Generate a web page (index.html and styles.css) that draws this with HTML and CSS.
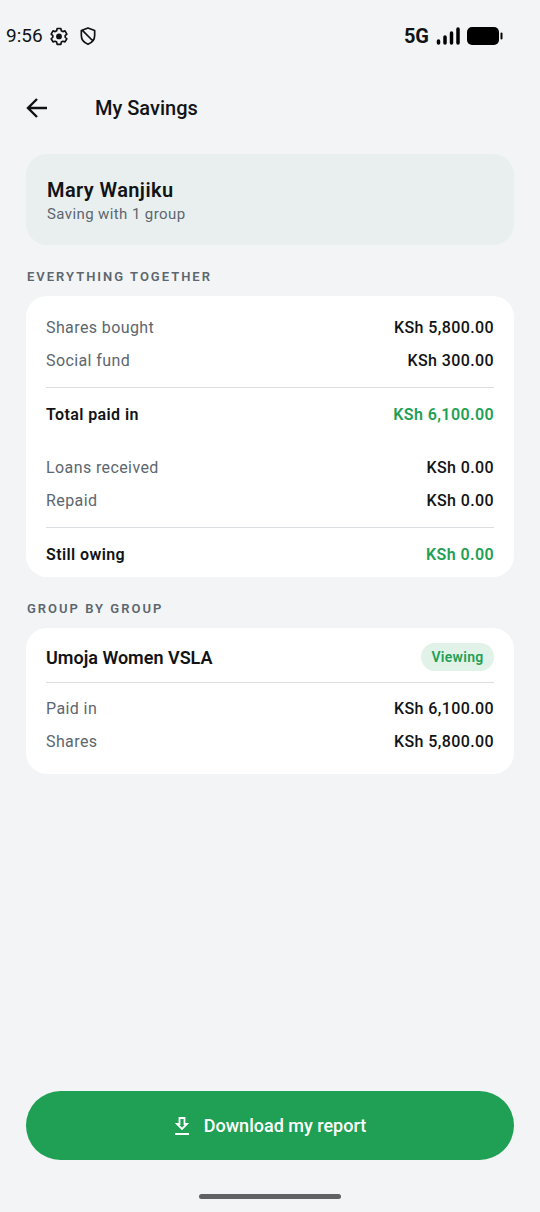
FILE: index.html
```html
<!DOCTYPE html>
<html lang="en">
<head>
<meta charset="utf-8">
<title>My Savings</title>
<link rel="stylesheet" href="styles.css">
</head>
<body>
<div class="screen">
  <header class="status">
    <span class="clock">9:56</span>
    <svg class="gear" width="20" height="20" viewBox="0 0 24 24" fill="none" stroke="#111" stroke-width="2" stroke-linejoin="round"><path d="M9.8 3h4.4l.6 2.7 1.8 1 2.6-.8 2.2 3.8-2 1.8v2l2 1.8-2.2 3.8-2.6-.8-1.8 1-.6 2.7H9.800l-.6-2.700-1.800-1-2.600.8-2.200-3.800 2-1.800v-2l-2-1.800 2.200-3.800 2.600.8 1.800-1z"/><circle cx="12" cy="12.500" r="2.500" fill="#111"/></svg>
    <svg class="shield" width="20" height="20" viewBox="0 0 24 24" fill="none" stroke="#111" stroke-width="2" stroke-linejoin="round"><path d="M12 2.500l8 3v6c0 5-3.400 8.800-8 10.500-4.600-1.700-8-5.500-8-10.500v-6zM5 5l13 13"/></svg>
    <span class="network">5G</span>
    <svg class="signal" width="24" height="18" viewBox="0 0 24 18"><path d="M2.500 14v2M9 10v6M15.500 6v10M22 2v14" stroke="#000" stroke-width="3.500" stroke-linecap="round"/></svg>
    <svg class="battery" width="36" height="18" viewBox="0 0 36 18"><rect width="32" height="18" rx="5"/><rect x="33.500" y="5.500" width="2" height="7" rx="1"/></svg>
  </header>
  <nav class="appbar">
    <svg width="22" height="20" viewBox="0 0 22 20" fill="none" stroke="#111" stroke-width="2.400"><path d="M21 10H2M11 1L2 10l9 9"/></svg>
    <h1>My Savings</h1>
  </nav>
  <main>
    <section class="member"><h2>Mary Wanjiku</h2><p>Saving with 1 group</p></section>
    <h3 class="label">EVERYTHING TOGETHER</h3>
    <section class="card totals">
      <div class="row"><span>Shares bought</span><b>KSh 5,800.00</b></div>
      <div class="row"><span>Social fund</span><b>KSh 300.00</b></div>
      <div class="row total"><span>Total paid in</span><b>KSh 6,100.00</b></div>
      <div class="row"><span>Loans received</span><b>KSh 0.00</b></div>
      <div class="row"><span>Repaid</span><b>KSh 0.00</b></div>
      <div class="row total"><span>Still owing</span><b>KSh 0.00</b></div>
    </section>
    <h3 class="label">GROUP BY GROUP</h3>
    <section class="card group">
      <div class="group-head"><h2>Umoja Women VSLA</h2><span class="badge">Viewing</span></div>
      <div class="row"><span>Paid in</span><b>KSh 6,100.00</b></div>
      <div class="row"><span>Shares</span><b>KSh 5,800.00</b></div>
    </section>
  </main>
  <button class="download"><svg width="16" height="18" viewBox="0 0 16 18" fill="none" stroke="#fff" stroke-width="1.800"><path d="M1 17h14M5.500 1h5v6H13l-5 5-5-5h2.500z"/></svg><span>Download my report</span></button>
  <div class="home"></div>
</div>
</body>
</html>
```
FILE: styles.css
```css
* { box-sizing: border-box; }
body { margin: 0; background: #f2f4f6; color: #111315; font-family: Roboto, sans-serif; }
h1, h2, h3, p { margin: 0; }
svg { display: block; flex: none; }
.screen { height: 1212px; display: flex; flex-direction: column; }
.status { height: 71px; padding: 0 37px 0 6px; display: flex; align-items: center; }
.clock { font-size: 19px; line-height: 22px; width: 42px; }
.gear { margin-left: 1px; }
.shield { margin-left: 9px; }
.network { margin-left: auto; font-size: 20px; font-weight: 700; }
.signal { margin-left: 7px; }
.battery { margin-left: 7px; }
.appbar { height: 74px; padding: 0 26px; display: flex; align-items: center; gap: 47px; }
.appbar h1 { font-size: 20px; font-weight: 500; line-height: 24px; }
main { flex: 1; padding: 9px 26px 0; }
.member { height: 91px; padding: 24px 21px; border-radius: 21px; background: #e9efef; }
.member h2 { font-size: 20px; line-height: 24px; font-weight: 600; letter-spacing: .4px; }
.member p { font-size: 15px; line-height: 24px; letter-spacing: .4px; color: #5c666f; }
.label { height: 51px; padding: 22px 1px 0; font-size: 13px; line-height: 20px; font-weight: 600; letter-spacing: 2px; color: #5c666f; }
.card { background: #fff; border-radius: 21px; padding: 15px 20px 0; }
.totals { height: 281px; }
.group { height: 146px; }
.row { height: 33px; display: flex; justify-content: space-between; align-items: center; font-size: 16px; letter-spacing: .4px; }
.row span { color: #5c666f; }
.row b { font-weight: 500; }
.total { height: 64px; border-top: 1px solid #dcdfe1; margin-top: 10px; padding-bottom: 10px; }
.total span { color: #111315; font-weight: 600; }
.total b { color: #1fa055; font-weight: 600; }
.group-head { height: 40px; display: flex; align-items: flex-start; justify-content: space-between; border-bottom: 1px solid #dcdfe1; margin-bottom: 9px; }
.group-head h2 { font-size: 18px; line-height: 30px; font-weight: 600; }
.badge { width: 73px; height: 28px; border-radius: 14px; background: #e1f3e9; color: #1fa055; font-size: 14px; line-height: 28px; font-weight: 600; text-align: center; letter-spacing: .3px; }
.download { height: 69px; margin: 0 26px; border: 0; border-radius: 35px; background: #1fa055; color: #fff; display: flex; align-items: center; justify-content: center; gap: 14px; font: 500 18px Roboto, sans-serif; }
.home { width: 142px; height: 5px; margin: 34px auto 13px; border-radius: 3px; background: #5f6163; }
```
